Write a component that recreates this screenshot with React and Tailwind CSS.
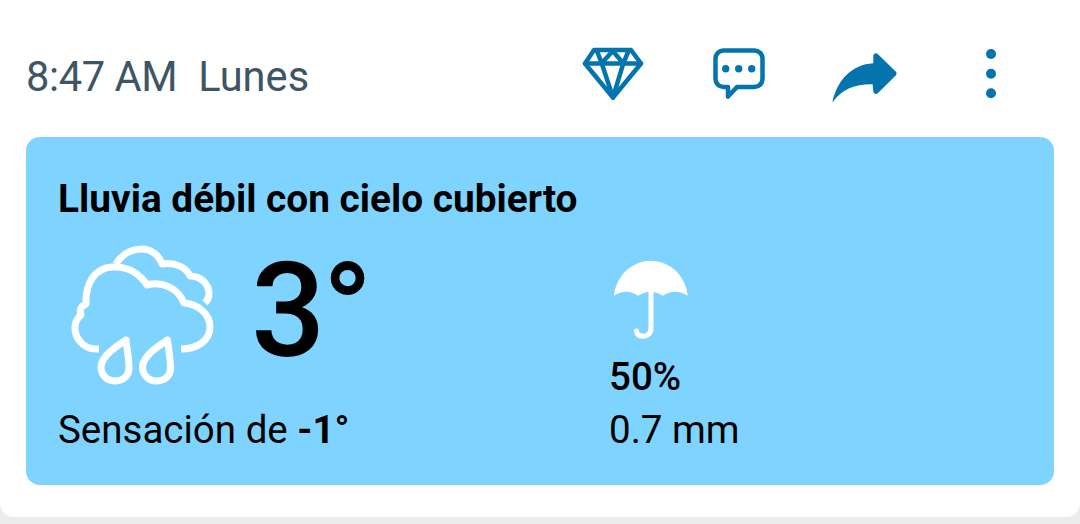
import React from "react";

const DiamondIcon = () => (
  <svg width="64" height="56" viewBox="0 0 64 56" fill="none" stroke="#0474ae" strokeWidth="4.5" strokeLinejoin="round" strokeLinecap="round">
    <path d="M13 4H50L60 17.5L32 51.5L4 17.5Z" />
    <path d="M4 17.5H60" />
    <path d="M16 5L20.7 17.3L31.7 5L42.3 17.3L47.5 5" />
    <path d="M20.7 17.3L32 51.5L42.3 17.3" />
  </svg>
);

const ChatIcon = () => (
  <svg width="58" height="56" viewBox="0 0 58 56" fill="none">
    <path
      d="M13.5 4.5H44.5C49 4.5 52.5 8 52.5 12.5V33C52.5 37.5 49 41 44.5 41H27L18 50.5V41H13.5C9 41 5.5 37.5 5.5 33V12.5C5.5 8 9 4.5 13.5 4.5Z"
      stroke="#0474ae"
      strokeWidth="4.5"
      strokeLinejoin="round"
    />
    <circle cx="15.7" cy="22.7" r="3.7" fill="#0474ae" />
    <circle cx="28.7" cy="22.7" r="3.7" fill="#0474ae" />
    <circle cx="41.7" cy="22.7" r="3.7" fill="#0474ae" />
  </svg>
);

const ShareIcon = () => (
  <svg width="72" height="56" viewBox="0 -4 72 56" fill="#0474ae">
    <path d="M4.3 52.7C9 30 24 14.5 45.3 13.3V6.5C45.3 3.5 48 2.3 50 4.3L67.7 21.5C68.9 22.7 68.9 24.3 67.7 25.5L50 43C48 45 45.3 43.5 45.3 41L44.6 34.3C27 34 14 39 4.3 52.7Z" />
  </svg>
);

const MoreIcon = () => (
  <svg width="32" height="56" viewBox="0 0 32 56" fill="#0474ae">
    <circle cx="16" cy="8" r="5" />
    <circle cx="16" cy="27.7" r="5" />
    <circle cx="16" cy="47.3" r="5" />
  </svg>
);

const RainCloudIcon = () => (
  <svg width="165" height="150" viewBox="0 0 165 150" fill="none" stroke="#ffffff" strokeWidth="7" strokeLinejoin="round">
    <path d="M39 109H36C24 109 15 99 15 88C15 83 17 78 21 75C19 70 21 66 26 64C25 42 36 28 52 27C68 26 80 34 87 45C102 41 118 48 124 63C138 64 150 74 150 87C150 100 138 109 121 109" />
    <path d="M56 24C62 14 71 9 82 9C91 9 99 15 102 24C115 22 126 27 130 36C141 36 149 44 149 54C149 58 148 60 145 63" />
    <path d="M66 100C57 106 41 116 41 127C41 135 47 141 55 141C63 141 69 136 69 128C69 119 67 109 66 100Z" />
    <path d="M107.5 100C98.5 106 82.5 116 82.5 127C82.5 135 88.5 141 96.5 141C104.5 141 110.5 136 110.5 128C110.5 119 108.5 109 107.5 100Z" />
  </svg>
);

const UmbrellaIcon = () => (
  <svg width="84" height="84" viewBox="0 0 84 84" fill="none">
    <path
      d="M4 37.7C6 18 22 2.7 40.7 2.7C60 2.7 76 18 77.7 37.7Q65 30 52.7 37.7Q40.7 30 28.3 37.7Q16 30 4 37.7Z"
      fill="#ffffff"
    />
    <path d="M41 32V70C41 76 36 79 32 78C29 78 27 76 26.5 73" stroke="#ffffff" strokeWidth="5" strokeLinecap="round" />
  </svg>
);

export default function App() {
  return (
    <div className="h-[524px] w-[1080px] overflow-hidden bg-[#ececec] font-['Roboto',sans-serif]">
      <div className="h-[517px] rounded-b-[14px] bg-white">
        {/* Top bar */}
        <div className="flex h-[137px] items-start pt-[46px]">
          <div className="ml-[26px] mt-[6px] flex w-[555px] gap-[21px] text-[41.6px] leading-[50px] text-[#3e5566]">
            <span className="tracking-[-0.4px]">8:47 AM</span>
            <span>Lunes</span>
          </div>
          <DiamondIcon />
          <div className="ml-[65px]"><ChatIcon /></div>
          <div className="ml-[60px]"><ShareIcon /></div>
          <div className="ml-[75px]"><MoreIcon /></div>
        </div>

        {/* Weather card */}
        <div className="mx-[26px] h-[348px] rounded-[14px] bg-[#7fd4ff] pl-[32px] pt-[40px] text-black">
          <h2 className="text-[38.8px] font-bold leading-[44px]">Lluvia débil con cielo cubierto</h2>
          <div className="mt-[17px] flex">
            <div className="w-[551px]">
              <div className="mt-[2px] flex h-[150px] items-start">
                <div className="ml-[2px]"><RainCloudIcon /></div>
                <span className="ml-[26px] mt-[-14px] text-[131px] font-medium leading-[170px] tracking-[-3px]">3°</span>
              </div>
              <p className="mt-[17px] text-[38.5px] leading-[46px]">
                Sensación de <span className="font-bold">-1°</span>
              </p>
            </div>
            <div className="mt-[20px]">
              <div className="ml-[1px]"><UmbrellaIcon /></div>
              <p className="mt-[13px] text-[38.5px] font-medium leading-[44px]">50%</p>
              <p className="mt-[8px] text-[38.5px] leading-[46px]">0.7 mm</p>
            </div>
          </div>
        </div>
      </div>
    </div>
  );
}
